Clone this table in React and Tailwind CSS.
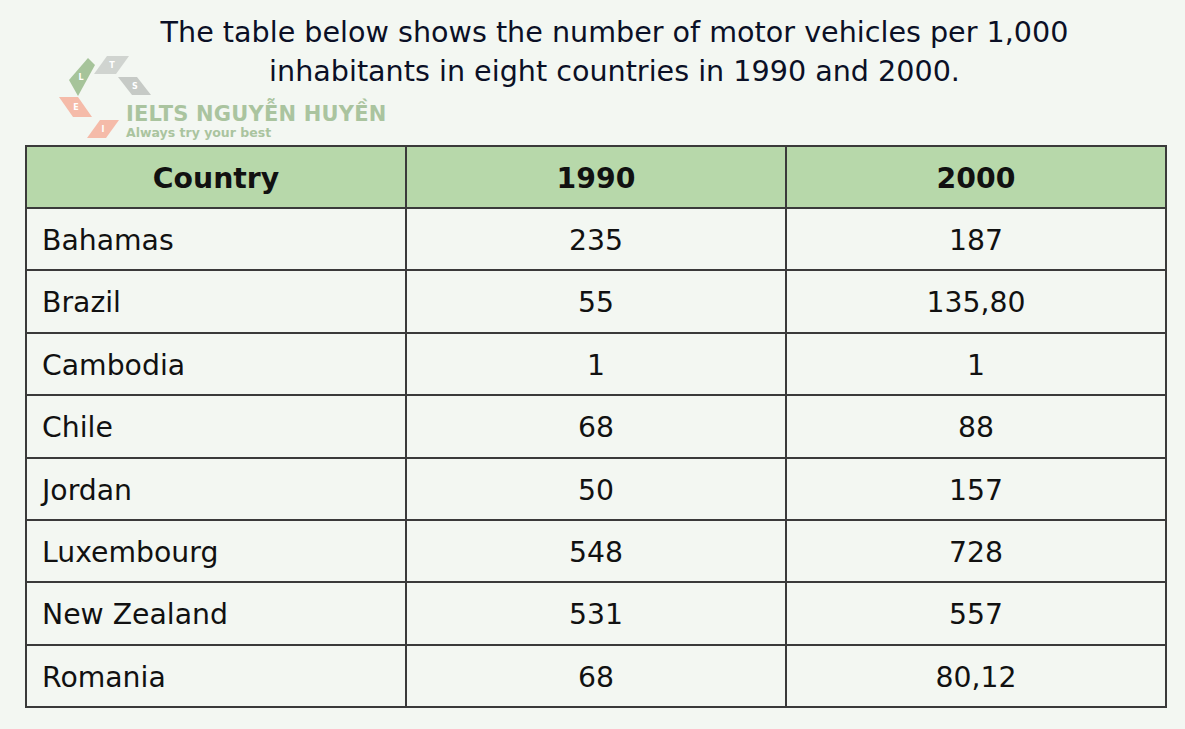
import React from 'react'

const ROWS = [
  ['Bahamas', '235', '187'],
  ['Brazil', '55', '135,80'],
  ['Cambodia', '1', '1'],
  ['Chile', '68', '88'],
  ['Jordan', '50', '157'],
  ['Luxembourg', '548', '728'],
  ['New Zealand', '531', '557'],
  ['Romania', '68', '80,12'],
]

function Logo() {
  return (
    <div className="absolute left-0 top-0 w-[400px] h-[145px] pointer-events-none">
      <svg width="160" height="145" viewBox="0 0 160 145" className="absolute left-0 top-0">
        <polygon points="88,58 95,65 78,96 69,80" fill="#a6c49a" />
        <polygon points="107,56 129,56 116,74 94,74" fill="#d0d4d0" />
        <polygon points="118,77 137,77 151,95 132,95" fill="#c6cac6" />
        <polygon points="59,97 78,97 92,117 73,117" fill="#f5bba9" />
        <polygon points="100,120 119,120 106,138 87,138" fill="#f5bba9" />
        <g fill="#ffffff" fontFamily="DejaVu Sans, sans-serif" fontWeight="bold" fontSize="8" textAnchor="middle">
          <text x="81" y="80">L</text>
          <text x="112" y="68">T</text>
          <text x="135" y="89">S</text>
          <text x="76" y="110">E</text>
          <text x="103" y="132">I</text>
        </g>
      </svg>
      <div className="absolute left-[126px] top-[104px] leading-none text-[#aac49f] font-['DejaVu_Sans',sans-serif] font-bold">
        <div className="text-[21px] tracking-[0.2px] whitespace-nowrap">IELTS NGUYỄN HUYỀN</div>
        <div className="text-[12.5px] mt-[2px] whitespace-nowrap">Always try your best</div>
      </div>
    </div>
  )
}

export default function App() {
  return (
    <div className="relative w-[1185px] h-[729px] bg-[#f3f7f2] font-['DejaVu_Sans',Verdana,sans-serif] overflow-hidden">
      <Logo />
      <div className="relative pt-[13px] pl-[44px] text-center text-[28.6px] leading-[39px] text-[#0b1026]">
        <p>The table below shows the number of motor vehicles per 1,000</p>
        <p>inhabitants in eight countries in 1990 and 2000.</p>
      </div>
      <div className="relative pl-[25px] mt-[54px]">
        <table className="w-[1142px] border-collapse text-[28.3px] text-[#111]">
          <thead>
            <tr className="h-[62px] bg-[#b7d8aa]">
              <th className="w-1/3 border-2 border-[#3a3a3a] pt-[4px] font-bold text-center">Country</th>
              <th className="w-1/3 border-2 border-[#3a3a3a] pt-[4px] font-bold text-center">1990</th>
              <th className="w-1/3 border-2 border-[#3a3a3a] pt-[4px] font-bold text-center">2000</th>
            </tr>
          </thead>
          <tbody>
            {ROWS.map((r) => (
              <tr key={r[0]} className="h-[62.4px]">
                <td className="border-2 border-[#3a3a3a] pt-[4px] pl-[15px] text-left">{r[0]}</td>
                <td className="border-2 border-[#3a3a3a] pt-[4px] text-center">{r[1]}</td>
                <td className="border-2 border-[#3a3a3a] pt-[4px] text-center">{r[2]}</td>
              </tr>
            ))}
          </tbody>
        </table>
      </div>
    </div>
  )
}
